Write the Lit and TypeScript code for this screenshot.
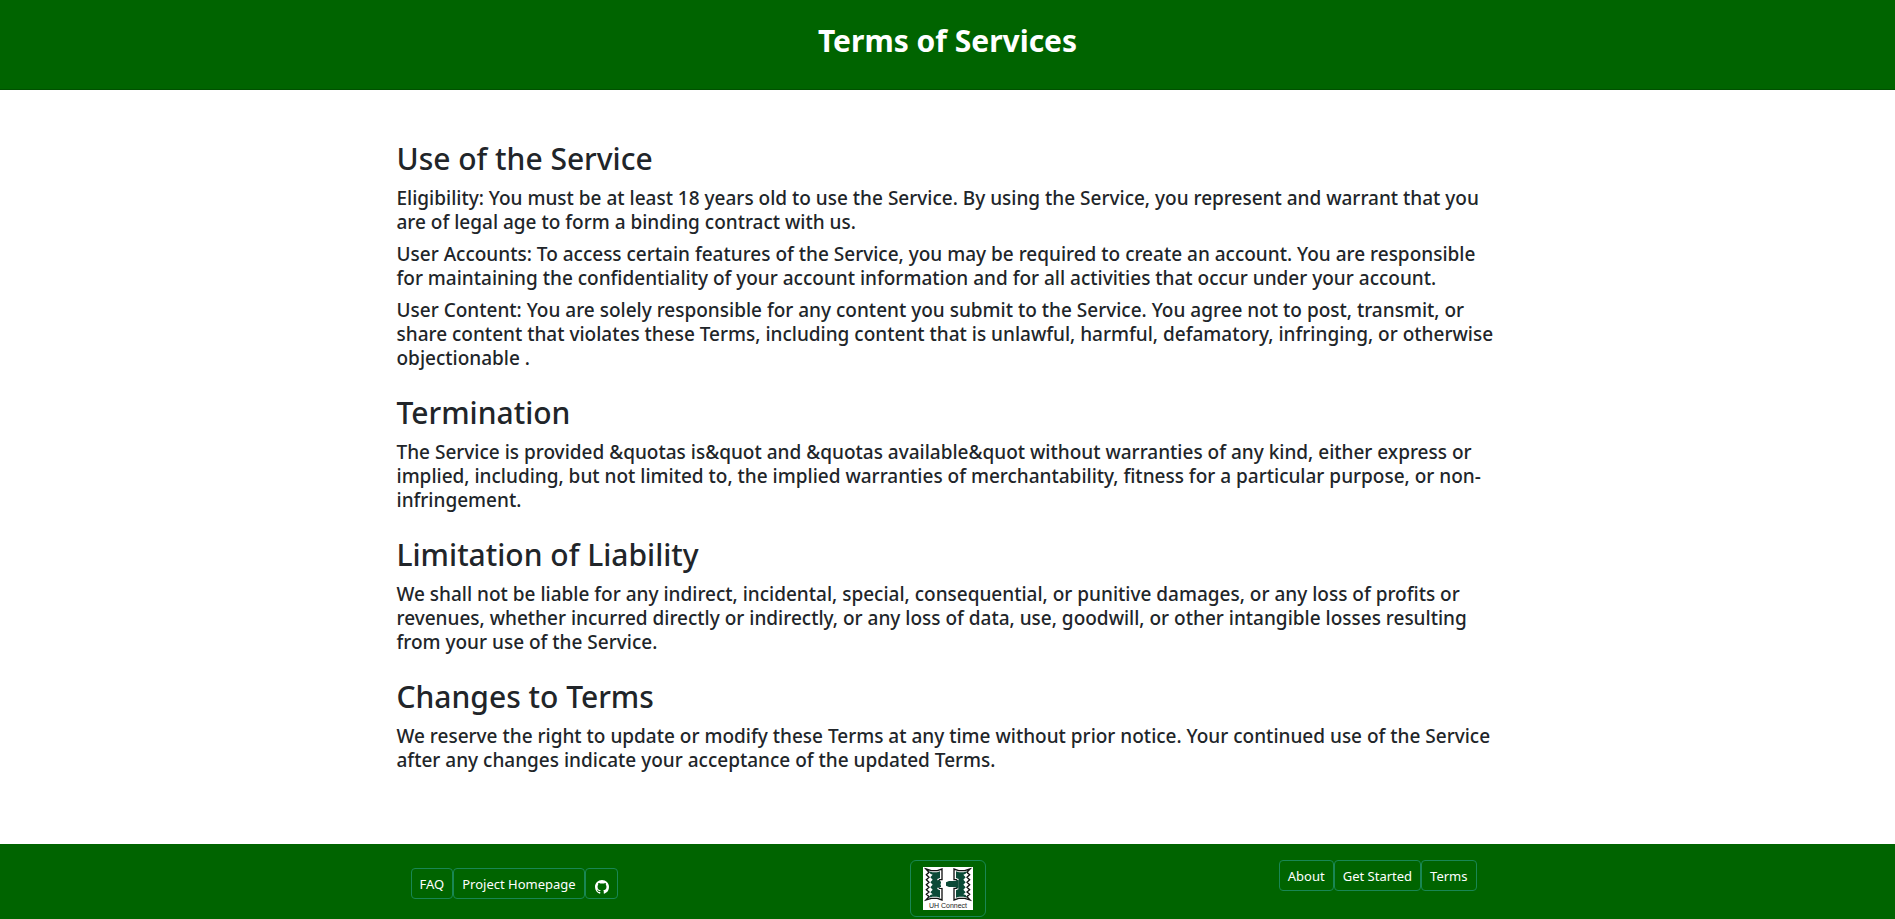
import { LitElement, html, css, svg } from "lit";
import { customElement } from "lit/decorators.js";

interface Section {
  title: string;
  items: string[];
}

const SECTIONS: Section[] = [
  {
    title: "Use of the Service",
    items: [
      "Eligibility: You must be at least 18 years old to use the Service. By using the Service, you represent and warrant that you are of legal age to form a binding contract with us.",
      "User Accounts: To access certain features of the Service, you may be required to create an account. You are responsible for maintaining the confidentiality of your account information and for all activities that occur under your account.",
      "User Content: You are solely responsible for any content you submit to the Service. You agree not to post, transmit, or share content that violates these Terms, including content that is unlawful, harmful, defamatory, infringing, or otherwise objectionable .",
    ],
  },
  {
    title: "Termination",
    items: [
      "The Service is provided &quotas is&quot and &quotas available&quot without warranties of any kind, either express or implied, including, but not limited to, the implied warranties of merchantability, fitness for a particular purpose, or non-infringement.",
    ],
  },
  {
    title: "Limitation of Liability",
    items: [
      "We shall not be liable for any indirect, incidental, special, consequential, or punitive damages, or any loss of profits or revenues, whether incurred directly or indirectly, or any loss of data, use, goodwill, or other intangible losses resulting from your use of the Service.",
    ],
  },
  {
    title: "Changes to Terms",
    items: [
      "We reserve the right to update or modify these Terms at any time without prior notice. Your continued use of the Service after any changes indicate your acceptance of the updated Terms.",
    ],
  },
];

@customElement("site-footer")
export class SiteFooter extends LitElement {
  static styles = css`
    :host {
      display: block;
      background: #006400;
    }
    .bar {
      box-sizing: border-box;
      max-width: 1102px;
      margin: 0 auto;
      padding: 16px 0 2px;
      display: grid;
      grid-template-columns: 1fr auto 1fr;
      align-items: start;
    }
    .group {
      display: flex;
    }
    .left {
      padding: 8px 0 0 14px;
    }
    .right {
      justify-content: flex-end;
      padding-right: 22px;
    }
    .btn {
      display: flex;
      align-items: center;
      box-sizing: border-box;
      padding: 5px 8px 3px;
      border: 1px solid #198754;
      border-radius: 4px;
      color: #fff;
      font-size: 13px;
      line-height: 21px;
      text-decoration: none;
      white-space: nowrap;
    }
    .icon {
      display: block;
      width: 14px;
      height: 14px;
      margin: 4px 0 0 1px;
    }
    .brand {
      padding: 6px 12px;
      border-radius: 6px;
    }
    .logo {
      display: block;
      width: 50px;
      height: 43px;
    }
  `;

  private half() {
    return svg`
      <path fill="#fff" stroke="#111" stroke-width="4" stroke-linejoin="miter"
        d="M9 6 L25 11 H43 L57 6 V38 H50 L46 43 V60 L50 64 H57 V99 L43 94 H25 L9 99 L18 89 L10 82 L18 75 L10 68 L18 61 L10 53 L18 46 L10 38 L18 31 L10 23 L18 16 Z"/>
      <path fill="#0b4a37"
        d="M18 13 L28 16 H42 L51 13 V33 L43 36 V66 L51 70 V92 L42 89 H28 L18 92 L22 84 L29 82 L22 76 L29 68 L22 61 L29 53 L22 46 L29 38 L22 31 L29 23 L22 20 Z"/>`;
  }

  render() {
    return html`
      <footer class="bar">
        <nav class="group left" aria-label="Project">
          <a class="btn" href="#faq">FAQ</a>
          <a class="btn" href="#project">Project Homepage</a>
          <a class="btn" href="#github" aria-label="GitHub">
            <svg class="icon" viewBox="0 0 16 16" fill="currentColor" aria-hidden="true">
              <path
                d="M8 0C3.58 0 0 3.58 0 8c0 3.54 2.29 6.53 5.47 7.59.4.07.55-.17.55-.38 0-.19-.01-.82-.01-1.49-2.01.37-2.53-.49-2.69-.94-.09-.23-.48-.94-.82-1.13-.28-.15-.68-.52-.01-.53.63-.01 1.08.58 1.23.82.72 1.21 1.87.87 2.33.66.07-.52.28-.87.51-1.07-1.78-.2-3.64-.89-3.64-3.95 0-.87.31-1.59.82-2.15-.08-.2-.36-1.02.08-2.12 0 0 .67-.21 2.2.82.64-.18 1.32-.27 2-.27s1.36.09 2 .27c1.53-1.04 2.2-.82 2.2-.82.44 1.1.16 1.92.08 2.12.51.56.82 1.27.82 2.15 0 3.07-1.87 3.75-3.65 3.95.29.25.54.73.54 1.48 0 1.07-.01 1.93-.01 2.2 0 .21.15.46.55.38A8.01 8.01 0 0 0 16 8c0-4.42-3.58-8-8-8z"
              />
            </svg>
          </a>
        </nav>
        <a class="btn brand" href="#home" aria-label="UH Connect">
          <svg class="logo" viewBox="0 0 150 129" aria-hidden="true">
            <rect width="150" height="129" fill="#fff" />
            <g>${this.half()}</g>
            <g transform="translate(150 0) scale(-1 1)">${this.half()}</g>
            <path fill="#fff" d="M44 42 H60 V62 H44 Z" />
            <path fill="#0b4a37" d="M42 40 H50 L54 45 V58 L50 62 H42 Z" />
            <path fill="#0b4a37" d="M107 38 V66 L96 60 H78 L69 56 V46 L78 42 H96 Z" />
            <circle cx="61" cy="52" r="8" fill="#fff" />
            <text
              x="75"
              y="124"
              text-anchor="middle"
              font-family="Liberation Sans, sans-serif"
              font-size="21"
              fill="#222"
            >UH Connect</text>
          </svg>
        </a>
        <nav class="group right" aria-label="Site">
          <a class="btn" href="#about">About</a>
          <a class="btn" href="#start">Get Started</a>
          <a class="btn" href="#terms">Terms</a>
        </nav>
      </footer>
    `;
  }
}

@customElement("app-root")
export class AppRoot extends LitElement {
  static styles = css`
    :host {
      display: flex;
      flex-direction: column;
      min-height: 100vh;
      background: #fff;
      color: #212529;
      font-family: "Noto Sans", "Open Sans", sans-serif;
    }
    .banner {
      background: #006400;
      border-bottom: 1px solid #005000;
      padding: 22px 16px 29px;
      text-align: center;
    }
    .title {
      margin: 0;
      color: #fff;
      font-size: 30px;
      font-weight: 700;
      line-height: 38px;
    }
    .content {
      box-sizing: border-box;
      width: 100%;
      max-width: 1102px;
      margin: 0 auto;
      padding: 50px 0 48px;
      flex: 1;
    }
    .section {
      padding-bottom: 16px;
    }
    .heading {
      margin: 0 0 8px;
      font-size: 30px;
      font-weight: 500;
      line-height: 38px;
    }
    .text {
      margin: 0 0 8px;
      font-size: 19px;
      font-weight: 500;
      line-height: 24px;
    }
  `;

  render() {
    return html`
      <header class="banner"><h1 class="title">Terms of Services</h1></header>
      <main class="content">
        ${SECTIONS.map(
          (s) => html`
            <section class="section">
              <h2 class="heading">${s.title}</h2>
              ${s.items.map((t) => html`<p class="text">${t}</p>`)}
            </section>
          `
        )}
      </main>
      <site-footer></site-footer>
    `;
  }
}
